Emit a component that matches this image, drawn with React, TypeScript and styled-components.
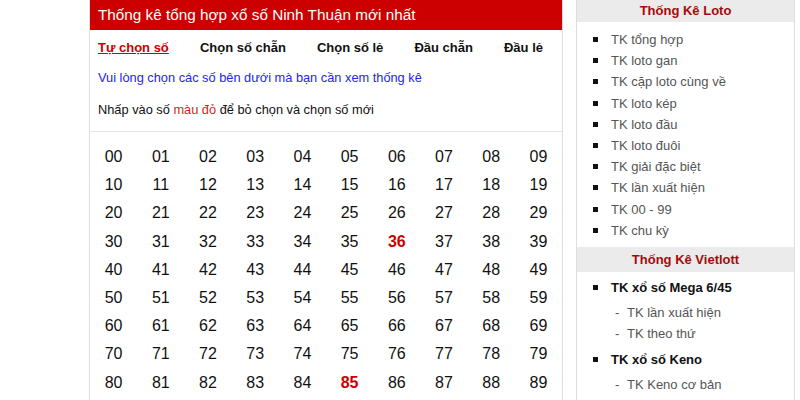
import React from 'react';
import styled, { createGlobalStyle } from 'styled-components';

const GlobalStyle = createGlobalStyle`
  html, body {
    margin: 0;
    padding: 0;
    background: #fff;
    font-family: 'Liberation Sans', Arial, sans-serif;
  }
  ul {
    margin: 0;
    padding: 0;
    list-style: none;
  }
`;

const Page = styled.div`
  display: flex;
  align-items: flex-start;
  gap: 13px;
  padding-left: 89px;
  height: 400px;
  overflow: hidden;
`;

const MainPanel = styled.section`
  width: 472px;
  border: 1px solid #dedede;
  border-top: none;
  min-height: 420px;
`;

const PanelTitle = styled.h1`
  margin: 0;
  height: 30px;
  line-height: 30px;
  padding-left: 8px;
  background: #cc0000;
  color: #fff;
  font-size: 15.3px;
  font-weight: 400;
`;

const Intro = styled.div`
  padding: 8px 19px 11px 8px;
  border-bottom: 1px solid #e6e6e6;
  font-size: 13px;
`;

const Tabs = styled.div`
  display: flex;
  justify-content: space-between;
  line-height: 20px;
`;

const Tab = styled.a<{ $active?: boolean }>`
  font-weight: 700;
  color: ${(p) => (p.$active ? '#cc0000' : '#111')};
  text-decoration: ${(p) => (p.$active ? 'underline' : 'none')};
  cursor: pointer;
`;

const Hint = styled.p<{ $blue?: boolean; $gap: number }>`
  margin: ${(p) => p.$gap}px 0 0;
  line-height: 20px;
  font-size: 12.8px;
  color: ${(p) => (p.$blue ? '#2424f0' : '#111')};

  em {
    font-style: normal;
    color: #d41f1f;
  }
`;

const NumberGrid = styled.div`
  display: grid;
  grid-template-columns: repeat(10, 1fr);
  padding-top: 11px;
`;

const NumCell = styled.span<{ $picked?: boolean }>`
  text-align: center;
  line-height: 28.2px;
  font-size: 16px;
  color: ${(p) => (p.$picked ? '#cc0000' : '#111')};
  font-weight: ${(p) => (p.$picked ? 700 : 400)};
  cursor: pointer;
`;

const Sidebar = styled.aside`
  width: 217px;
  border-left: 1px solid #dedede;
  border-right: 1px solid #dedede;
  min-height: 420px;
`;

const BoxTitle = styled.h3<{ $h: number }>`
  margin: 0;
  height: ${(p) => p.$h}px;
  line-height: ${(p) => p.$h}px;
  background: #ebebeb;
  text-align: center;
  font-size: 13px;
  font-weight: 700;
  color: #a80a0a;
`;

const LinkList = styled.ul<{ $top?: number }>`
  padding: ${(p) => p.$top ?? 6}px 0 6px !important;
`;

const LinkItem = styled.li<{ $strong?: boolean }>`
  position: relative;
  padding-left: 34px;
  line-height: 21.2px;
  font-size: 13px;
  color: ${(p) => (p.$strong ? '#111' : '#555')};
  font-weight: ${(p) => (p.$strong ? 700 : 400)};

  &::before {
    content: '';
    position: absolute;
    left: 16px;
    top: 8px;
    width: 5px;
    height: 5px;
    background: #111;
  }
`;

const SubList = styled.ul`
  padding: 4px 0 5px !important;
`;

const SubItem = styled.li`
  position: relative;
  padding-left: 16px;
  line-height: 21px;
  font-size: 13px;
  font-weight: 400;
  color: #555;

  &::before {
    content: '-';
    position: absolute;
    left: 4px;
    top: 0;
    color: #555;
  }
`;

const tabs = ['Tự chọn số', 'Chọn số chẵn', 'Chọn số lẻ', 'Đầu chẵn', 'Đầu lẻ'];
const picked = [36, 85];
const lotoLinks = [
  'TK tổng hợp',
  'TK loto gan',
  'TK cặp loto cùng về',
  'TK loto kép',
  'TK loto đầu',
  'TK loto đuôi',
  'TK giải đặc biệt',
  'TK lần xuất hiện',
  'TK 00 - 99',
  'TK chu kỳ',
];
const vietlott = [
  { name: 'TK xổ số Mega 6/45', subs: ['TK lần xuất hiện', 'TK theo thứ'] },
  { name: 'TK xổ số Keno', subs: ['TK Keno cơ bản', 'TK Keno nâng cao'] },
];

const App = () => {
  const nums = Array.from({ length: 100 }, (_, i) => i);

  return (
    <>
      <GlobalStyle />
      <Page>
        <MainPanel>
          <PanelTitle>Thống kê tổng hợp xổ số Ninh Thuận mới nhất</PanelTitle>
          <Intro>
            <Tabs>
              {tabs.map((t, i) => (
                <Tab key={t} $active={i === 0}>
                  {t}
                </Tab>
              ))}
            </Tabs>
            <Hint $blue $gap={10}>
              Vui lòng chọn các số bên dưới mà bạn cần xem thống kê
            </Hint>
            <Hint $gap={12}>
              Nhấp vào số <em>màu đỏ</em> để bỏ chọn và chọn số mới
            </Hint>
          </Intro>
          <NumberGrid>
            {nums.map((n) => (
              <NumCell key={n} $picked={picked.includes(n)}>
                {String(n).padStart(2, '0')}
              </NumCell>
            ))}
          </NumberGrid>
        </MainPanel>
        <Sidebar>
          <BoxTitle $h={22}>Thống Kê Loto</BoxTitle>
          <LinkList $top={7}>
            {lotoLinks.map((l) => (
              <LinkItem key={l}>{l}</LinkItem>
            ))}
          </LinkList>
          <BoxTitle $h={25}>Thống Kê Vietlott</BoxTitle>
          <LinkList $top={5}>
            {vietlott.map((g) => (
              <LinkItem key={g.name} $strong>
                {g.name}
                <SubList>
                  {g.subs.map((s) => (
                    <SubItem key={s}>{s}</SubItem>
                  ))}
                </SubList>
              </LinkItem>
            ))}
          </LinkList>
        </Sidebar>
      </Page>
    </>
  );
};

export default App;
